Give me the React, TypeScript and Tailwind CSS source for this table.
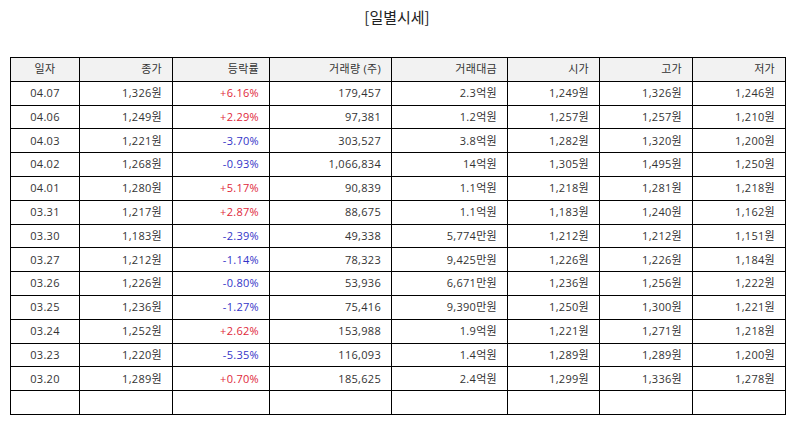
const COLUMNS = [
  { label: '일자', width: 'w-[69px]', align: 'text-center' },
  { label: '종가', width: 'w-[93px]', align: 'text-right' },
  { label: '등락률', width: 'w-[97px]', align: 'text-right' },
  { label: '거래량 (주)', width: 'w-[122px]', align: 'text-right' },
  { label: '거래대금', width: 'w-[116px]', align: 'text-right' },
  { label: '시가', width: 'w-[92px]', align: 'text-right' },
  { label: '고가', width: 'w-[93px]', align: 'text-right' },
  { label: '저가', width: 'w-[93px]', align: 'text-right' },
];

const ROWS = [
  ['04.07', '1,326원', '+6.16%', '179,457', '2.3억원', '1,249원', '1,326원', '1,246원'],
  ['04.06', '1,249원', '+2.29%', '97,381', '1.2억원', '1,257원', '1,257원', '1,210원'],
  ['04.03', '1,221원', '-3.70%', '303,527', '3.8억원', '1,282원', '1,320원', '1,200원'],
  ['04.02', '1,268원', '-0.93%', '1,066,834', '14억원', '1,305원', '1,495원', '1,250원'],
  ['04.01', '1,280원', '+5.17%', '90,839', '1.1억원', '1,218원', '1,281원', '1,218원'],
  ['03.31', '1,217원', '+2.87%', '88,675', '1.1억원', '1,183원', '1,240원', '1,162원'],
  ['03.30', '1,183원', '-2.39%', '49,338', '5,774만원', '1,212원', '1,212원', '1,151원'],
  ['03.27', '1,212원', '-1.14%', '78,323', '9,425만원', '1,226원', '1,226원', '1,184원'],
  ['03.26', '1,226원', '-0.80%', '53,936', '6,671만원', '1,236원', '1,256원', '1,222원'],
  ['03.25', '1,236원', '-1.27%', '75,416', '9,390만원', '1,250원', '1,300원', '1,221원'],
  ['03.24', '1,252원', '+2.62%', '153,988', '1.9억원', '1,221원', '1,271원', '1,218원'],
  ['03.23', '1,220원', '-5.35%', '116,093', '1.4억원', '1,289원', '1,289원', '1,200원'],
  ['03.20', '1,289원', '+0.70%', '185,625', '2.4억원', '1,299원', '1,336원', '1,278원'],
  ['', '', '', '', '', '', '', ''],
];

function rateColor(value: string) {
  if (value.startsWith('+')) return 'text-[#e0283a]';
  if (value.startsWith('-')) return 'text-[#3434c8]';
  return '';
}

export default function App() {
  return (
    <div className="h-[425px] w-[794px] bg-white font-['Open_Sans','Noto_Sans_CJK_KR',sans-serif] text-[#333]">
      <h1 className="pt-[5px] text-center font-['Noto_Sans_CJK_KR',sans-serif] text-[15px] leading-[24px] text-[#222]">
        [일별시세]
      </h1>
      <div className="px-[10px] pt-[28px]">
        <table className="w-[775px] table-fixed border-collapse text-[11px] tracking-[0.3px]">
          <thead>
            <tr className="h-[23.8px] bg-[#f2f2f2]">
              {COLUMNS.map((col) => (
                <th
                  key={col.label}
                  className={`${col.width} ${col.align} border border-black px-[10px] py-0 font-normal`}
                >
                  {col.label}
                </th>
              ))}
            </tr>
          </thead>
          <tbody>
            {ROWS.map((row, i) => (
              <tr key={i} className="h-[23.8px]">
                {row.map((cell, j) => (
                  <td
                    key={j}
                    className={`${COLUMNS[j].align} ${j === 2 ? rateColor(cell) : ''} border border-black px-[10px] py-0`}
                  >
                    {cell}
                  </td>
                ))}
              </tr>
            ))}
          </tbody>
        </table>
      </div>
    </div>
  );
}
